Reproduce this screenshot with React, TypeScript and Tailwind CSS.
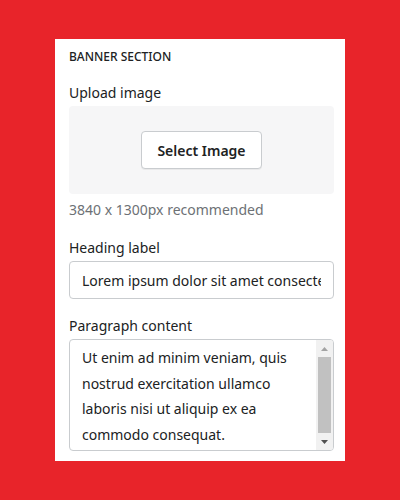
import type { FC } from "react";

const FONT = "font-['Segoe_UI','Noto_Sans','Open_Sans',sans-serif]";

const Label: FC<{ text: string; className?: string }> = ({ text, className }) => (
    <div className={`text-[14px] leading-[20px] text-[#202223] ${className ?? ""}`}>{text}</div>
);

const FakeScrollbar = () => (
    <div className="flex w-[17px] flex-col items-center bg-[#f1f1f1]">
        <div className="flex h-[17px] w-full items-center justify-center">
            <svg width="7" height="4" viewBox="0 0 7 4">
                <path d="M0 4 L3.5 0 L7 4 Z" fill="#a3a3a3" />
            </svg>
        </div>
        <div className="w-[13px] flex-1 bg-[#c1c1c1]" />
        <div className="flex h-[17px] w-full items-center justify-center">
            <svg width="7" height="4" viewBox="0 0 7 4">
                <path d="M0 0 L7 0 L3.5 4 Z" fill="#505050" />
            </svg>
        </div>
    </div>
);

export default function App() {
    return (
        <div className={`flex h-[500px] w-[400px] items-center justify-center bg-[#e8242a] ${FONT}`}>
            <div className="flex h-[422px] w-[290px] flex-col bg-white pl-[14px] pr-[11px] pt-[10px]">
                <div className="text-[12px] font-medium uppercase leading-[16px] text-[#202223]">Banner Section</div>

                <Label text="Upload image" className="mt-[18px]" />
                <div className="mt-[3px] flex h-[88px] items-center justify-center rounded-[4px] bg-[#f6f6f7]">
                    <button className="h-[38px] w-[121px] rounded-[4px] border border-[#c9cccf] bg-white text-[14px] font-semibold text-[#202223] shadow-[0_1px_0_rgba(0,0,0,0.05)]">
                        Select Image
                    </button>
                </div>
                <div className="mt-[6px] text-[14px] leading-[20px] text-[#6d7175]">3840 x 1300px recommended</div>

                <Label text="Heading label" className="mt-[18px]" />
                <input
                    readOnly
                    defaultValue="Lorem ipsum dolor sit amet consectetur adipiscing"
                    className="mt-[3px] h-[38px] w-full rounded-[4px] border border-[#c9cccf] px-[12px] text-[14px] text-[#202223] outline-none"
                />

                <Label text="Paragraph content" className="mt-[17px]" />
                <div className="mt-[3px] flex h-[112px] overflow-hidden rounded-[4px] border border-[#c9cccf]">
                    <div className="flex-1 pl-[12px] pr-[8px] pt-[5px] text-[14px] leading-[25.5px] text-[#202223]">
                        Ut enim ad minim veniam, quis nostrud exercitation ullamco laboris nisi ut aliquip ex ea commodo consequat.
                    </div>
                    <FakeScrollbar />
                </div>
            </div>
        </div>
    );
}
